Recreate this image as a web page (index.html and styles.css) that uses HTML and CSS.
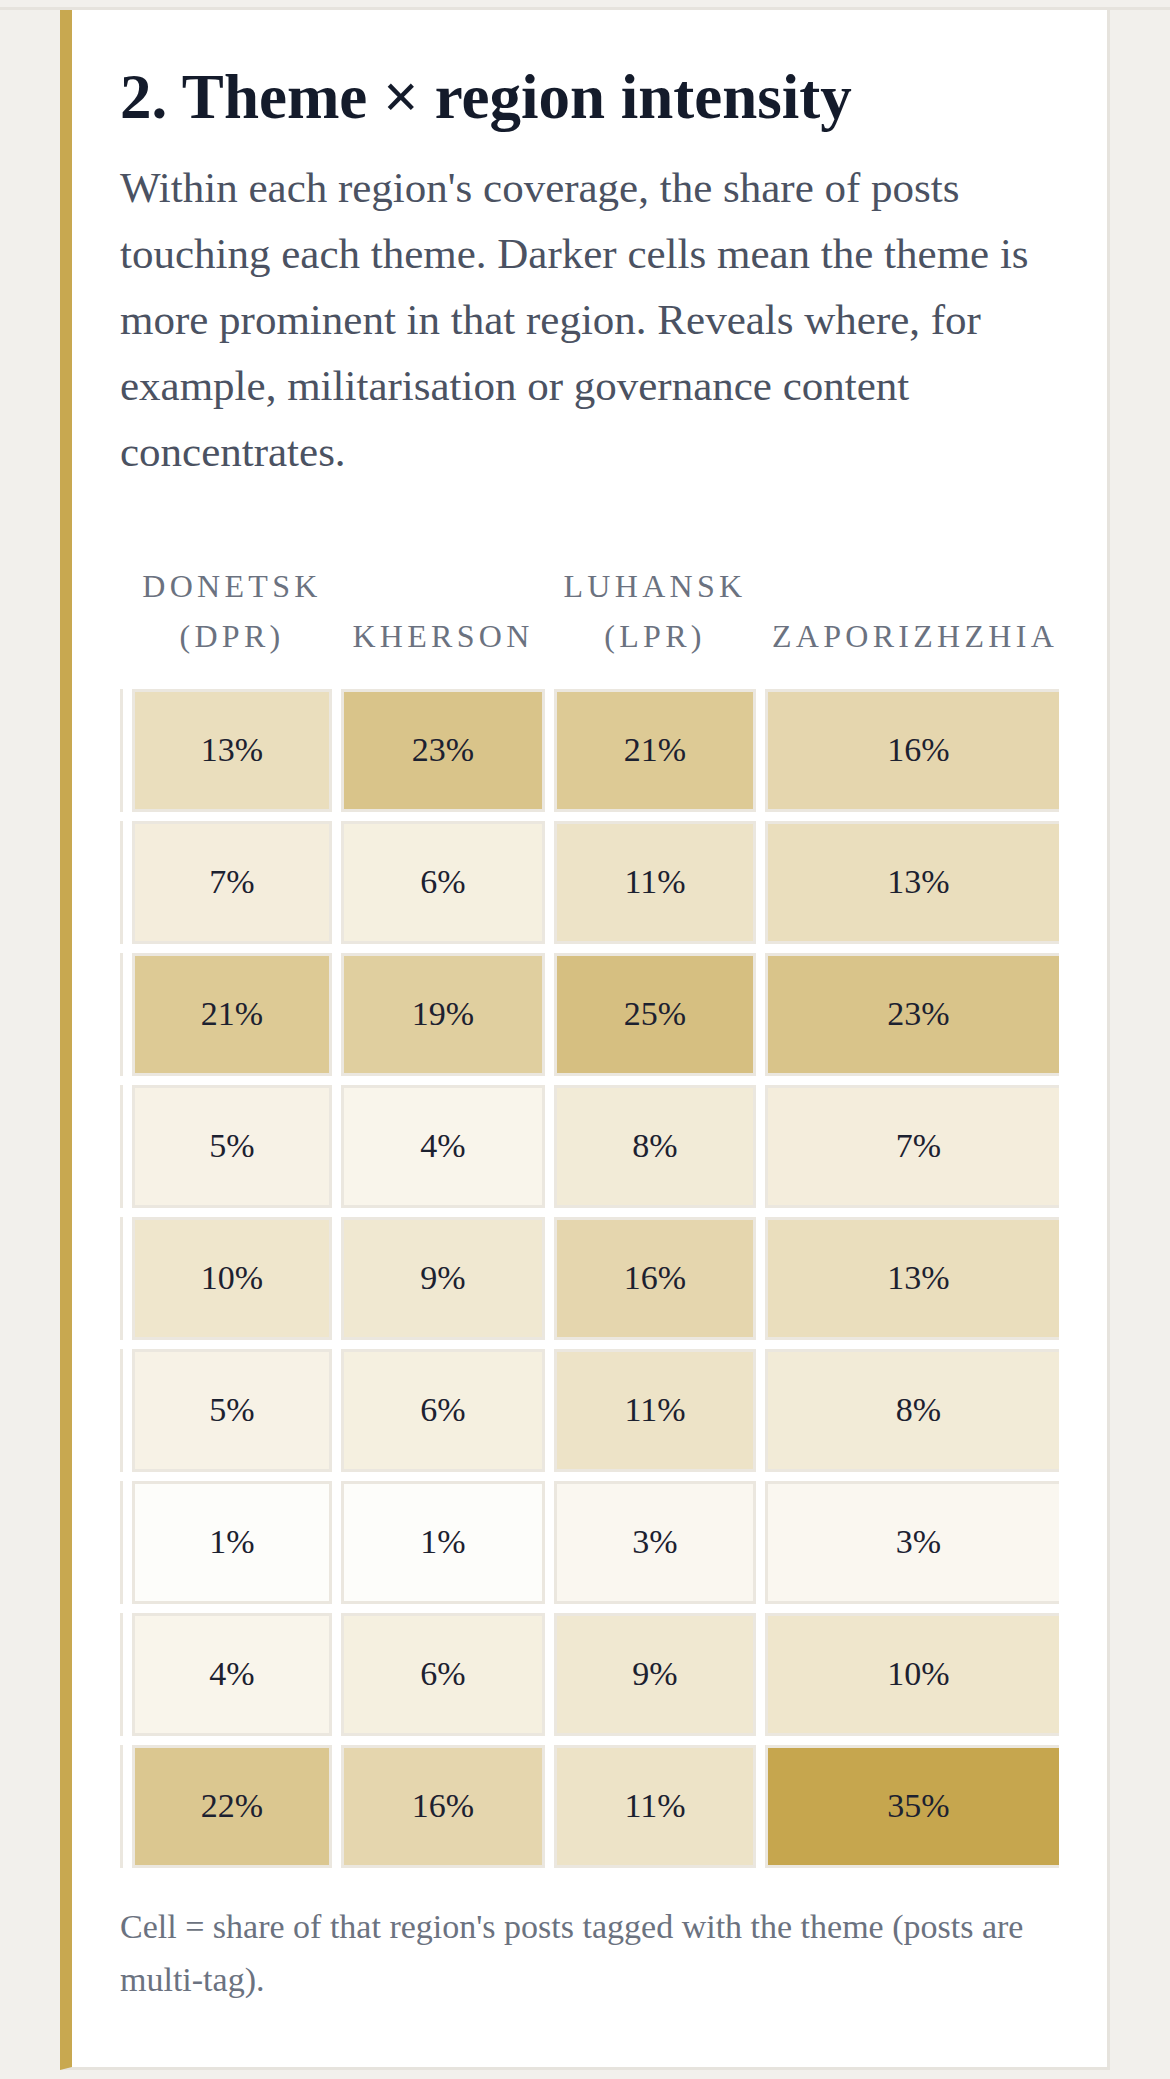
FILE: index.html
```html
<!DOCTYPE html>
<html lang="en">
<head>
<meta charset="utf-8">
<title>Theme × region intensity</title>
<link rel="stylesheet" href="styles.css">
</head>
<body>
<div class="page">
  <div class="top-rule"></div>
  <section class="card">
    <h2 class="title">2. Theme × region intensity</h2>
    <p class="lede">Within each region's coverage, the share of posts touching each theme. Darker cells mean the theme is more prominent in that region. Reveals where, for example, militarisation or governance content concentrates.</p>

    <div class="heat-scroll">
      <div class="heat">
        <div class="corner"></div>
        <div class="col-head">Donetsk (DPR)</div>
        <div class="col-head">Kherson</div>
        <div class="col-head">Luhansk (LPR)</div>
        <div class="col-head col-head-edge">Zaporizhzhia</div>

        <div class="row-label"></div>
        <div class="cell" style="background: rgba(198,166,78,0.371)">13%</div>
        <div class="cell" style="background: rgba(198,166,78,0.657)">23%</div>
        <div class="cell" style="background: rgba(198,166,78,0.600)">21%</div>
        <div class="cell cell-edge" style="background: rgba(198,166,78,0.457)">16%</div>

        <div class="row-label"></div>
        <div class="cell" style="background: rgba(198,166,78,0.200)">7%</div>
        <div class="cell" style="background: rgba(198,166,78,0.171)">6%</div>
        <div class="cell" style="background: rgba(198,166,78,0.314)">11%</div>
        <div class="cell cell-edge" style="background: rgba(198,166,78,0.371)">13%</div>

        <div class="row-label"></div>
        <div class="cell" style="background: rgba(198,166,78,0.600)">21%</div>
        <div class="cell" style="background: rgba(198,166,78,0.543)">19%</div>
        <div class="cell" style="background: rgba(198,166,78,0.714)">25%</div>
        <div class="cell cell-edge" style="background: rgba(198,166,78,0.657)">23%</div>

        <div class="row-label"></div>
        <div class="cell" style="background: rgba(198,166,78,0.143)">5%</div>
        <div class="cell" style="background: rgba(198,166,78,0.114)">4%</div>
        <div class="cell" style="background: rgba(198,166,78,0.229)">8%</div>
        <div class="cell cell-edge" style="background: rgba(198,166,78,0.200)">7%</div>

        <div class="row-label"></div>
        <div class="cell" style="background: rgba(198,166,78,0.286)">10%</div>
        <div class="cell" style="background: rgba(198,166,78,0.257)">9%</div>
        <div class="cell" style="background: rgba(198,166,78,0.457)">16%</div>
        <div class="cell cell-edge" style="background: rgba(198,166,78,0.371)">13%</div>

        <div class="row-label"></div>
        <div class="cell" style="background: rgba(198,166,78,0.143)">5%</div>
        <div class="cell" style="background: rgba(198,166,78,0.171)">6%</div>
        <div class="cell" style="background: rgba(198,166,78,0.314)">11%</div>
        <div class="cell cell-edge" style="background: rgba(198,166,78,0.229)">8%</div>

        <div class="row-label"></div>
        <div class="cell" style="background: rgba(198,166,78,0.029)">1%</div>
        <div class="cell" style="background: rgba(198,166,78,0.029)">1%</div>
        <div class="cell" style="background: rgba(198,166,78,0.086)">3%</div>
        <div class="cell cell-edge" style="background: rgba(198,166,78,0.086)">3%</div>

        <div class="row-label"></div>
        <div class="cell" style="background: rgba(198,166,78,0.114)">4%</div>
        <div class="cell" style="background: rgba(198,166,78,0.171)">6%</div>
        <div class="cell" style="background: rgba(198,166,78,0.257)">9%</div>
        <div class="cell cell-edge" style="background: rgba(198,166,78,0.286)">10%</div>

        <div class="row-label"></div>
        <div class="cell" style="background: rgba(198,166,78,0.629)">22%</div>
        <div class="cell" style="background: rgba(198,166,78,0.457)">16%</div>
        <div class="cell" style="background: rgba(198,166,78,0.314)">11%</div>
        <div class="cell cell-edge" style="background: rgba(198,166,78,1.000)">35%</div>
      </div>
    </div>

    <p class="note">Cell = share of that region's posts tagged with the theme (posts are multi-tag).</p>
  </section>
</div>
</body>
</html>
```

FILE: styles.css
```css
html, body {
  margin: 0;
  padding: 0;
  background: #f2f0ec;
}

body {
  font-family: "Liberation Serif", "Times New Roman", serif;
}

.page {
  padding: 7px 60px 10px 60px;
}

.top-rule {
  height: 3px;
  background: #e6e3dd;
  margin: 0 -60px;
}

.card {
  background: #ffffff;
  border-left: 12px solid #c8a850;
  border-right: 3px solid #e6e3dd;
  border-bottom: 3px solid #e6e3dd;
  padding: 50px 48px 50px 48px;
}

.title {
  margin: 0 0 19px 0;
  font-size: 63px;
  line-height: 1.2;
  font-weight: 700;
  color: #141b2b;
}

.lede {
  margin: 0;
  font-size: 43px;
  line-height: 66px;
  color: #4b5262;
}

.heat-scroll {
  margin-top: 76px;
  overflow: hidden;
}

.heat {
  display: grid;
  grid-template-columns: 3px 200px 204px 202px 1fr;
  column-gap: 9px;
  row-gap: 9.5px;
}

.col-head {
  align-self: end;
  padding-bottom: 19px;
  text-align: center;
  text-transform: uppercase;
  font-size: 32px;
  line-height: 50px;
  letter-spacing: 4.3px;
  color: #6b7280;
}

.col-head-edge {
  padding-left: 6px;
}

.row-label {
  box-sizing: border-box;
  height: 122.5px;
  border-right: 3px solid #ebe7df;
}

.cell {
  box-sizing: border-box;
  height: 122.5px;
  border: 3px solid #ebe7df;
  display: flex;
  align-items: center;
  justify-content: center;
  font-size: 34px;
  color: #1c2130;
}

.cell-edge {
  margin-right: -3px;
  padding-left: 10px;
}

.note {
  margin: 32px 0 11px 0;
  font-size: 34px;
  line-height: 53px;
  color: #6b7280;
}
```
